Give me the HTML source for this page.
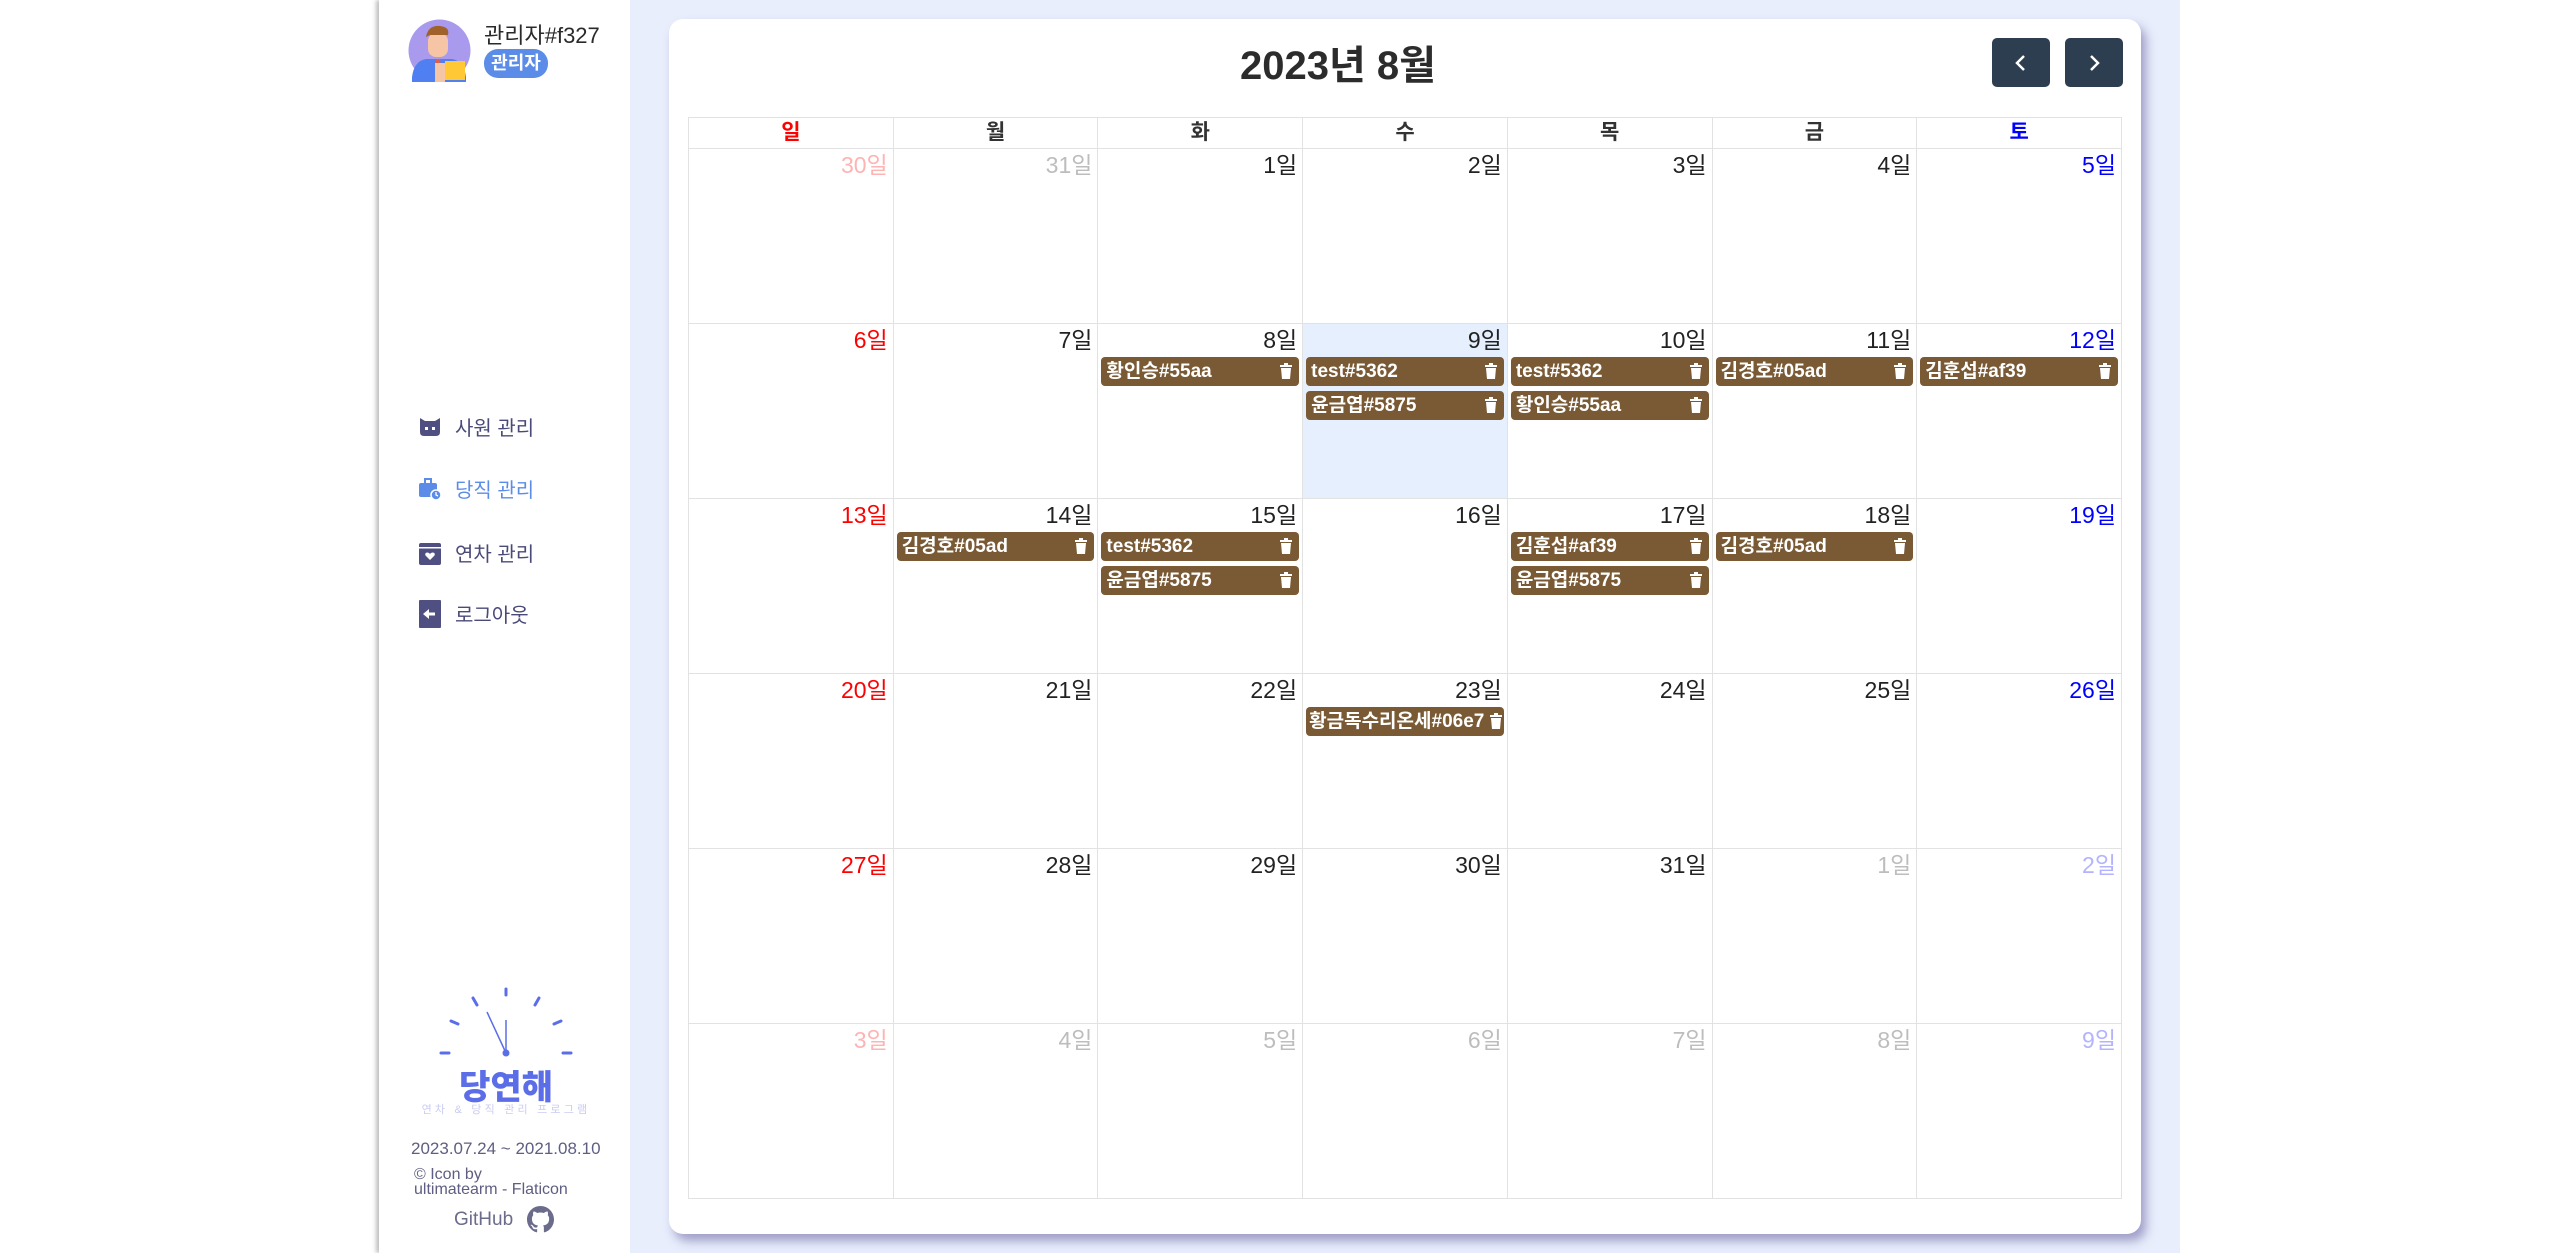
<!DOCTYPE html>
<html><head><meta charset="utf-8"><style>
*{margin:0;padding:0;box-sizing:border-box}
body{width:2560px;height:1253px;position:relative;background:#fff;font-family:"Liberation Sans","Noto Sans CJK KR",sans-serif;overflow:hidden}
#side{position:absolute;left:379px;top:0;width:251px;height:1253px;background:#fff;box-shadow:-3px 0 4px rgba(0,0,0,.25)}
#main{position:absolute;left:630px;top:0;width:1550px;height:1253px;background:#e8eefc}
#card{position:absolute;left:669px;top:19px;width:1472px;height:1215px;background:#fff;border-radius:14px;box-shadow:5px 7px 10px rgba(90,80,150,.5)}
.title{position:absolute;left:1240px;top:33px;font-size:40px;font-weight:bold;color:#2c2c2c;white-space:nowrap}
.btn{position:absolute;top:38px;width:58px;height:49px;background:#2c3e50;border-radius:5px}
.btn svg{position:absolute;left:21px;top:16px}
#grid{position:absolute;left:688px;top:117px;width:1434px;border-left:1px solid #e2e2e2;border-top:1px solid #e2e2e2;display:grid;grid-template-columns:repeat(7,1fr);grid-template-rows:31px repeat(6,175px)}
#grid>div{border-right:1px solid #e2e2e2;border-bottom:1px solid #e2e2e2;position:relative}
.h{text-align:center;font-weight:bold;font-size:21px;line-height:30px;color:#333}
.n{text-align:right;font-size:23px;padding:4px 5px 0 0;line-height:24px;color:#222;height:30px}
.ev{margin:3px 3px 0 3px;height:29px;background:#7a5a35;border-radius:4px;color:#fff;font-size:19px;font-weight:bold;line-height:29px;padding-left:5px;position:relative;white-space:nowrap;overflow:hidden}
.ev svg{position:absolute;right:7px;top:6px}
.ev+.ev{margin-top:5px}
.sel{background:#e6effd}
.red{color:#f00}.blu{color:#00f}.g{color:#bdbdbd}.gr{color:#ffb3b3}.gb{color:#b3b3ff}
.menu{position:absolute;left:419px;font-size:20px;color:#4a4a78;display:flex;align-items:center;gap:14px}
</style></head><body>
<div id="side"></div>
<div id="main"></div>
<div id="card"></div>

<!-- profile -->
<svg style="position:absolute;left:408px;top:19px" width="63" height="63" viewBox="0 0 63 63">
<circle cx="31.5" cy="31.5" r="31" fill="#a99aee"/>
<path d="M4 58 Q6 42 18 40 L44 40 Q56 42 58 58 L58 63 L4 63Z" fill="#4f7ff0"/>
<rect x="20" y="14" width="20" height="24" rx="8" fill="#f5c5a5"/>
<path d="M18 18 Q20 6 32 7 Q42 8 40 16 L22 16Z" fill="#a0622a"/>
<path d="M28 40 L32 40 L33 52 L30 56 L27 52Z" fill="#e25d4a"/>
<rect x="27" y="44" width="10" height="19" fill="#f5c5a5"/>
<rect x="37" y="42" width="20" height="19" fill="#ffc834"/>
</svg>
<div style="position:absolute;left:484px;top:18px;font-size:22px;color:#2a2a2a">관리자#f327</div>
<div style="position:absolute;left:484px;top:49px;width:64px;height:29px;background:#5b8de8;border-radius:14px;color:#fff;font-weight:bold;font-size:18px;line-height:29px;text-align:center">관리자</div>

<!-- menu -->
<div class="menu" style="top:412px"><svg width="22" height="20" viewBox="0 0 22 20"><path d="M1 1 L6 4 L16 4 L21 1 L21 15 Q21 19 17 19 L5 19 Q1 19 1 15Z" fill="#4f4f82"/><rect x="6" y="10" width="3" height="3" fill="#fff"/><rect x="13" y="10" width="3" height="3" fill="#fff"/></svg>사원 관리</div>
<div class="menu" style="top:474px;color:#5b8de8"><svg width="22" height="22" viewBox="0 0 22 22"><rect x="0" y="5" width="18" height="14" rx="2" fill="#5b8de8"/><rect x="6" y="1" width="6" height="5" fill="none" stroke="#5b8de8" stroke-width="2"/><circle cx="17" cy="17" r="5" fill="#5b8de8" stroke="#fff" stroke-width="1.5"/><path d="M17 14 V17 L19 18" stroke="#fff" stroke-width="1.3" fill="none"/></svg>당직 관리</div>
<div class="menu" style="top:538px"><svg width="22" height="24" viewBox="0 0 22 24"><rect x="0" y="2" width="22" height="22" rx="2" fill="#4f4f82"/><rect x="0" y="6" width="22" height="1.5" fill="#fff"/><path d="M11 19 L6.5 14.5 Q5.5 12 8 11.5 Q10 11.5 11 13 Q12 11.5 14 11.5 Q16.5 12 15.5 14.5Z" fill="#fff"/></svg>연차 관리</div>
<div class="menu" style="top:599px"><svg width="22" height="28" viewBox="0 0 22 28"><rect x="0" y="0" width="22" height="28" rx="1" fill="#4f4f82"/><path d="M4 14 L10 9 L10 12.5 L16 12.5 L16 15.5 L10 15.5 L10 19Z" fill="#fff"/></svg>로그아웃</div>

<!-- logo -->
<svg style="position:absolute;left:438px;top:985px" width="136" height="76" viewBox="0 0 136 76">
<g stroke="#5b6ee8" stroke-width="3" stroke-linecap="round">
<line x1="68" y1="4" x2="68" y2="10"/><line x1="35" y1="13" x2="39" y2="20"/><line x1="101" y1="13" x2="97" y2="20"/>
<line x1="13" y1="36" x2="20" y2="39"/><line x1="123" y1="36" x2="116" y2="39"/>
<line x1="3" y1="68" x2="11" y2="68"/><line x1="125" y1="68" x2="133" y2="68"/></g>
<line x1="68" y1="68" x2="68" y2="35" stroke="#5b6ee8" stroke-width="1.5"/>
<line x1="68" y1="68" x2="49" y2="27" stroke="#5b6ee8" stroke-width="1.5"/>
<circle cx="68" cy="68" r="3.5" fill="#5b6ee8"/>
</svg>
<div style="position:absolute;left:455px;top:1060px;width:102px;text-align:center;font-size:34px;font-weight:900;color:#5b6ee8">당연해</div>
<div style="position:absolute;left:420px;top:1101px;width:172px;text-align:center;font-size:11px;letter-spacing:3.2px;color:#c9ccf2;white-space:nowrap">연차 &amp; 당직 관리 프로그램</div>
<div style="position:absolute;left:411px;top:1139px;font-size:17px;color:#5e5e82;white-space:nowrap">2023.07.24 ~ 2021.08.10</div>
<div style="position:absolute;left:414px;top:1167px;font-size:16px;line-height:15px;color:#5e5e82;white-space:nowrap">© Icon by<br>ultimatearm - Flaticon</div>
<div style="position:absolute;left:454px;top:1209px;font-size:19px;color:#6b6b8c">GitHub</div>
<svg style="position:absolute;left:527px;top:1206px" width="27" height="27" viewBox="0 0 16 16"><path fill="#6b6b8c" d="M8 0C3.58 0 0 3.58 0 8c0 3.54 2.29 6.53 5.47 7.59.4.07.55-.17.55-.38 0-.19-.01-.82-.01-1.49-2.01.37-2.53-.49-2.69-.94-.09-.23-.48-.94-.82-1.13-.28-.15-.68-.52-.01-.53.63-.01 1.08.58 1.23.82.72 1.21 1.87.87 2.33.66.07-.52.28-.87.51-1.07-1.78-.2-3.64-.89-3.64-3.95 0-.87.31-1.59.82-2.15-.08-.2-.36-1.02.08-2.12 0 0 .67-.21 2.2.82.64-.18 1.32-.27 2-.27.68 0 1.36.09 2 .27 1.53-1.04 2.2-.82 2.2-.82.44 1.1.16 1.92.08 2.12.51.56.82 1.27.82 2.15 0 3.07-1.87 3.75-3.65 3.95.29.25.54.73.54 1.48 0 1.07-.01 1.93-.01 2.2 0 .21.15.46.55.38A8.013 8.013 0 0016 8c0-4.42-3.58-8-8-8z"/></svg>

<!-- header -->
<div class="title">2023년 8월</div>
<div class="btn" style="left:1992px"><svg width="16" height="18" viewBox="0 0 16 18"><path d="M11 2 L4 9 L11 16" stroke="#fff" stroke-width="2.5" fill="none"/></svg></div>
<div class="btn" style="left:2065px"><svg width="16" height="18" viewBox="0 0 16 18"><path d="M5 2 L12 9 L5 16" stroke="#fff" stroke-width="2.5" fill="none"/></svg></div>

<svg width="0" height="0" style="position:absolute"><defs><symbol id="t" viewBox="0 0 12 16"><rect x="0" y="2" width="12" height="2" fill="#fff"/><rect x="4" y="0" width="4" height="2" fill="#fff"/><path d="M1 5 H11 L10 16 H2Z" fill="#fff"/></symbol></defs></svg>

<div id="grid">
<div class="h red">일</div><div class="h">월</div><div class="h">화</div><div class="h">수</div><div class="h">목</div><div class="h">금</div><div class="h blu">토</div>

<div><div class="n gr">30일</div></div><div><div class="n g">31일</div></div><div><div class="n">1일</div></div><div><div class="n">2일</div></div><div><div class="n">3일</div></div><div><div class="n">4일</div></div><div><div class="n blu">5일</div></div>

<div><div class="n red">6일</div></div>
<div><div class="n">7일</div></div>
<div><div class="n">8일</div><div class="ev">황인승#55aa<svg width="12" height="16"><use href="#t"/></svg></div></div>
<div class="sel"><div class="n">9일</div><div class="ev">test#5362<svg width="12" height="16"><use href="#t"/></svg></div><div class="ev">윤금엽#5875<svg width="12" height="16"><use href="#t"/></svg></div></div>
<div><div class="n">10일</div><div class="ev">test#5362<svg width="12" height="16"><use href="#t"/></svg></div><div class="ev">황인승#55aa<svg width="12" height="16"><use href="#t"/></svg></div></div>
<div><div class="n">11일</div><div class="ev">김경호#05ad<svg width="12" height="16"><use href="#t"/></svg></div></div>
<div><div class="n blu">12일</div><div class="ev">김훈섭#af39<svg width="12" height="16"><use href="#t"/></svg></div></div>

<div><div class="n red">13일</div></div>
<div><div class="n">14일</div><div class="ev">김경호#05ad<svg width="12" height="16"><use href="#t"/></svg></div></div>
<div><div class="n">15일</div><div class="ev">test#5362<svg width="12" height="16"><use href="#t"/></svg></div><div class="ev">윤금엽#5875<svg width="12" height="16"><use href="#t"/></svg></div></div>
<div><div class="n">16일</div></div>
<div><div class="n">17일</div><div class="ev">김훈섭#af39<svg width="12" height="16"><use href="#t"/></svg></div><div class="ev">윤금엽#5875<svg width="12" height="16"><use href="#t"/></svg></div></div>
<div><div class="n">18일</div><div class="ev">김경호#05ad<svg width="12" height="16"><use href="#t"/></svg></div></div>
<div><div class="n blu">19일</div></div>

<div><div class="n red">20일</div></div><div><div class="n">21일</div></div><div><div class="n">22일</div></div>
<div><div class="n">23일</div><div class="ev" style="padding-left:3px">황금독수리온세#06e7<svg width="12" height="16" style="right:2px"><use href="#t"/></svg></div></div>
<div><div class="n">24일</div></div><div><div class="n">25일</div></div><div><div class="n blu">26일</div></div>

<div><div class="n red">27일</div></div><div><div class="n">28일</div></div><div><div class="n">29일</div></div><div><div class="n">30일</div></div><div><div class="n">31일</div></div><div><div class="n g">1일</div></div><div><div class="n gb">2일</div></div>

<div><div class="n gr">3일</div></div><div><div class="n g">4일</div></div><div><div class="n g">5일</div></div><div><div class="n g">6일</div></div><div><div class="n g">7일</div></div><div><div class="n g">8일</div></div><div><div class="n gb">9일</div></div>
</div>
</body></html>
